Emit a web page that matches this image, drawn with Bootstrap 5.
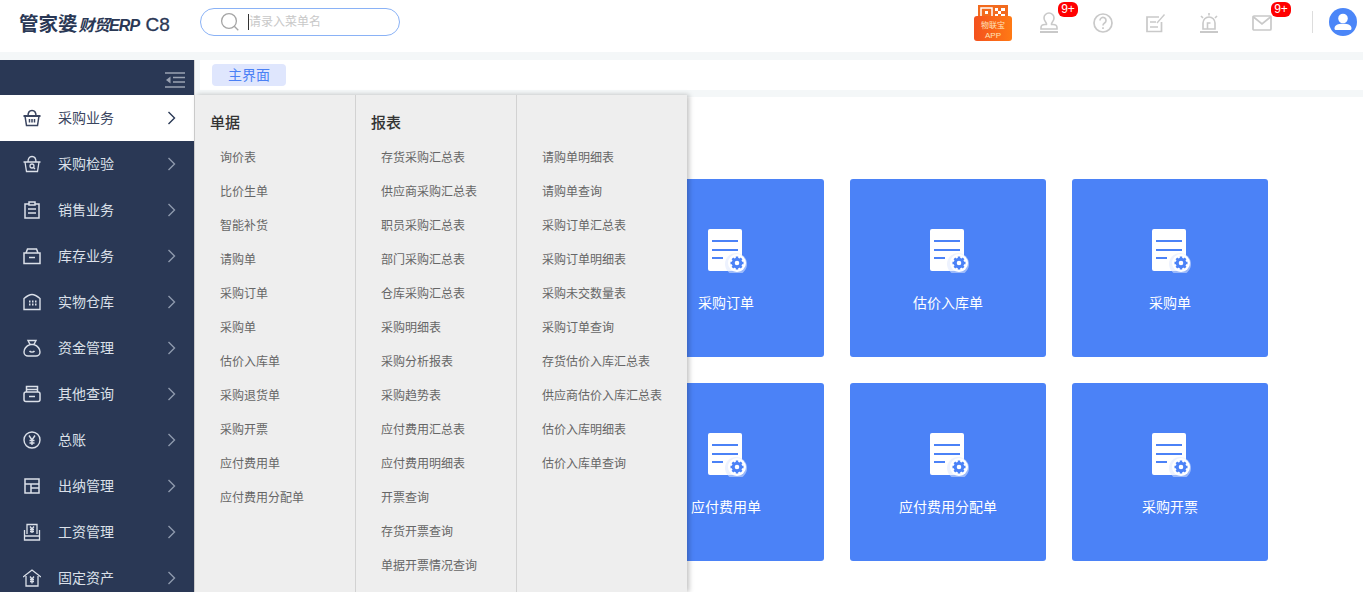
<!DOCTYPE html>
<html lang="zh">
<head>
<meta charset="utf-8">
<title>管家婆财贸ERP C8</title>
<link href="https://cdn.jsdelivr.net/npm/bootstrap@5.3.0/dist/css/bootstrap.min.css" rel="stylesheet">
<style>
html,body{height:592px;overflow:hidden;background:#fff}
body{font-family:"Liberation Sans","Noto Sans CJK SC",sans-serif;font-size:14px}
.top{height:52px;position:relative;padding-bottom:8px}
.logo{margin-left:19px;width:181px;color:#2a3855;white-space:nowrap;line-height:1;padding-top:5px}
.logo b{font-size:19.500px;font-weight:700}
.logo i{font-size:16px;font-weight:700;letter-spacing:-.8px;margin-left:1px}
.logo span{font-size:19px;font-weight:400;margin-left:6px;-webkit-text-stroke:.3px #2a3855}
.search{width:200px;height:28px;border:1px solid #8ab2f6;border-radius:14px;padding-left:19px;color:#bbb;font-size:12px}
.search em{font-style:normal;border-left:1px solid #333;margin-left:8px;line-height:16px;color:#c8c8c8}
.tools{margin-left:auto;padding-right:6px}
.tool{position:relative;width:20px;height:20px;display:block}
.tool .num{position:absolute;left:19px;top:-10px;width:20px;height:15px;background:#f00;color:#fff;border-radius:6px;font-size:12px;line-height:15px;text-align:center}
.app{width:38px;height:36px;position:relative;margin-right:23px;margin-top:1px}
.app .tag{position:absolute;left:0;bottom:0;width:38px;height:25px;background:linear-gradient(90deg,#f4511e,#ff7a14);border-radius:3px;color:#ffe4b8;font-size:8px;line-height:10px;text-align:center;padding-top:5px}
.sep{width:1px;height:22px;background:#ddd;margin:0 16px 0 20px}
.avatar{width:28px;height:28px}
.stage{height:540px;padding-top:8px;background:#f4f7f8;position:relative}
.side{width:195px;height:532px;background:#2a3855;overflow:hidden;color:#dbe0e9;flex:none;border-right:1px solid #d4d4d4}
.side .fold{height:35px;padding:12px 9px 0 0}
.side .row-i{height:46px;padding-left:23px;padding-right:18px}
.side .row-i svg.ic{width:18px;height:18px;margin-right:17px;flex:none}
.side .row-i span{flex:1}
.side .row-i svg.ch{width:9px;height:14px;color:#8e99ad}
.side .on{background:#fff;color:#3a4560;width:194px}
.side .on svg.ch{color:#2a3855!important}
.right{flex:1;margin-left:5px;min-width:0}
.tabs{height:30px;background:#fff;padding:4px 12px}
.tabs span{display:block;width:74px;height:22px;line-height:22px;background:#dfe6fd;color:#4a80f5;border-radius:4px;text-align:center}
.main{margin-top:7px;height:503px;background:#fff;padding:82px 0 0 206px}
.grid{display:grid;grid-template-columns:repeat(4,196px);grid-auto-rows:178px;gap:26px}
.tile{background:#4b82f7;border-radius:3px;color:#fff;padding-top:50px;text-align:center}
.tile svg{width:40px;height:44px;display:block;margin:0 auto 20px;position:relative;left:2px}
.fly{position:absolute;left:195px;top:43px;width:492px;height:497px;background:#eee;box-shadow:2px 0 5px rgba(0,0,0,.25);overflow:hidden}
.col-f{height:100%;border-right:1px solid #d2d2d2;padding-top:10px;flex:none}
.col-f:nth-child(1){width:161px;padding-left:15px}
.col-f:nth-child(2){width:161px;padding-left:15px}
.col-f:nth-child(3){width:170px;padding-left:25px;border-right:0}
.col-f h6{font-size:15px;font-weight:500;color:#333;height:35px;line-height:35px;margin:0 0 1px}
.col-f a{display:block;height:34px;line-height:34px;margin-left:10px;font-size:12px;color:#666;text-decoration:none;white-space:nowrap}
.col-f:nth-child(3) a{margin-left:0}
</style>
</head>
<body>
<svg width="0" height="0" class="position-absolute">
<defs>
<symbol id="doc" viewBox="0 0 40 44">
<rect x="0" y="0" width="34" height="42" rx="2" fill="#fff"/>
<path d="M4 12h26M4 21h26M4 29h11" stroke="#4b82f7" stroke-width="2" fill="none"/>
<circle cx="28" cy="35" r="11" fill="#dfe8fd" opacity=".55"/>
<circle cx="29" cy="34" r="9" fill="#fff"/>
<circle cx="29" cy="34" r="3.800" fill="#fff" stroke="#4b82f7" stroke-width="3"/>
<path d="M29 27.500v2.500M29 38v2.500M22.500 34H25M33 34h2.500M24.400 29.400l1.800 1.800M31.800 36.800l1.800 1.800M24.400 38.600l1.800-1.800M31.800 31.200l1.800-1.800" stroke="#4b82f7" stroke-width="2.400"/>
</symbol>
<symbol id="chev" viewBox="0 0 9 14"><path d="M1.500 1l6 6-6 6" fill="none" stroke="currentColor" stroke-width="1.400"/></symbol>
</defs>
</svg>

<header class="top d-flex align-items-center">
  <div class="logo"><b>管家婆</b><i>财贸ERP</i><span>C8</span></div>
  <div class="search d-flex align-items-center">
    <svg width="20" height="20" viewBox="0 0 20 20" fill="none" stroke="#a5a5a5" stroke-width="1.300"><circle cx="9" cy="9" r="7.400"/><path d="M14.300 14.300l4 4"/></svg>
    <em>请录入菜单名</em>
  </div>
  <div class="tools d-flex align-items-center">
    <div class="app">
      <svg class="position-absolute top-0 start-0" width="38" height="14" viewBox="0 0 38 14"><rect x="4" y="0" width="30" height="14" fill="#f26a1e"/><rect x="7" y="3" width="11" height="9" fill="none" stroke="#fff" stroke-width="1.500"/><rect x="11" y="6" width="3" height="3" fill="#fff"/><path d="M21 3h3v3h-3zM27 3h4v3h-4zM24 6h3v3h-3zM21 9h3v3h-3zM27 9h4v3h-4z" fill="#fff"/></svg>
      <div class="tag">物联宝<br>APP</div>
    </div>
    <a class="tool ms-1" style="margin-right:34px"><svg width="20" height="22" viewBox="0 0 20 22" fill="none" stroke="#c9c9c9" stroke-width="1.600"><path d="M2 15.500c0-2 1.500-3 4-3h1.500c.6-2-2.500-3-2.500-6.500a5 5 0 0 1 10 0c0 3.500-3.100 4.500-2.500 6.500H14c2.500 0 4 1 4 3v1.500H2z"/><path d="M1 20h18" stroke-width="2"/></svg><span class="num">9+</span></a>
    <a class="tool" style="margin-right:33px"><svg width="20" height="20" viewBox="0 0 20 20" fill="none" stroke="#c9c9c9" stroke-width="1.700"><circle cx="10" cy="10" r="9"/><path d="M7 7.500a3 3 0 1 1 4.600 2.500c-1.100.7-1.600 1.200-1.600 2.600"/><path d="M10 14.200v1.800"/></svg></a>
    <a class="tool" style="margin-right:33px"><svg width="20" height="20" viewBox="0 0 20 20" fill="none" stroke="#c9c9c9" stroke-width="1.700"><path d="M15.500 9v9.500H1V4h12"/><path d="M4 9h6M4 14h8"/><path d="M11 10L18.500 1.500" stroke-width="1.300"/></svg></a>
    <a class="tool" style="margin-right:33px"><svg width="20" height="20" viewBox="0 0 20 20" fill="none" stroke="#c9c9c9" stroke-width="1.600"><path d="M4 16V10a6 6 0 0 1 12 0v6z"/><path d="M8.500 16v-6h3"/><path d="M1 19h18" stroke-width="2"/><path d="M10 0v2.500M2 3l2 2M18 3l-2 2"/></svg></a>
    <a class="tool"><svg width="20" height="16" viewBox="0 0 20 16" fill="none" stroke="#c9c9c9" stroke-width="1.700"><rect x="1" y="1" width="18" height="14" rx="1"/><path d="M1.500 2l8.500 7 8.500-7"/></svg><span class="num">9+</span></a>
    <div class="sep" style="margin-left:40px"></div>
    <svg class="avatar" viewBox="0 0 28 28"><circle cx="14" cy="14" r="14" fill="#4b86f8"/><circle cx="14" cy="10.500" r="4.800" fill="#fff"/><path d="M5.500 20.500c0-3.500 3.500-4.800 8.500-4.800s8.500 1.300 8.500 4.800c0 1-.8 1.500-1.800 1.500H7.300c-1 0-1.800-.5-1.800-1.500z" fill="#fff"/></svg>
  </div>
</header>

<div class="stage d-flex align-items-start">
  <nav class="side">
    <div class="fold d-flex justify-content-end"><svg width="20" height="16" viewBox="0 0 20 16" fill="none" stroke="#9aa2b2" stroke-width="1.500"><path d="M0 1h20M8 5.500h12M8 10h12M0 15h20"/><path d="M5.500 4.500v7L1 8z" fill="#9aa2b2" stroke="none"/></svg></div>
    <div class="row-i on d-flex align-items-center"><svg class="ic" viewBox="0 0 18 18" fill="none" stroke="currentColor" stroke-width="1.500"><path d="M.5 7h17" stroke-width="2"/><path d="M2 7l1.500 9.500h11L16 7M5 7c0-3 1-5.500 4-5.500S13 4 13 7M6.500 10v3.500M9 10v3.500M11.500 10v3.500"/></svg><span>采购业务</span><svg class="ch"><use href="#chev"/></svg></div>
    <div class="row-i d-flex align-items-center"><svg class="ic" viewBox="0 0 18 18" fill="none" stroke="currentColor" stroke-width="1.300"><path d="M.5 7h17M2 7l1.500 9.500h11L16 7M5 7c0-3 1-5.500 4-5.500S13 4 13 7"/><circle cx="9" cy="11" r="2"/><path d="M10.500 12.500l1.500 1.500"/></svg><span>采购检验</span><svg class="ch"><use href="#chev"/></svg></div>
    <div class="row-i d-flex align-items-center"><svg class="ic" viewBox="0 0 18 18" fill="none" stroke="currentColor" stroke-width="1.500"><path d="M6 3H2v14h14V3h-4"/><rect x="6" y="1" width="6" height="3"/><path d="M5 8h8M5 12h8"/></svg><span>销售业务</span><svg class="ch"><use href="#chev"/></svg></div>
    <div class="row-i d-flex align-items-center"><svg class="ic" viewBox="0 0 18 18" fill="none" stroke="currentColor" stroke-width="1.500"><path d="M3 6l1.500-4h9L15 6"/><path d="M1 6h16v10.500H1z"/><path d="M6 10.500h6"/></svg><span>库存业务</span><svg class="ch"><use href="#chev"/></svg></div>
    <div class="row-i d-flex align-items-center"><svg class="ic" viewBox="0 0 18 18" fill="none" stroke="currentColor" stroke-width="1.400"><path d="M1 16.500V5.500C4 3 7 1.500 9 1.500s5 1.500 8 4v11z"/><path d="M6 8.500h1.500M9 8.500h1.500M12 8.500h1.500M6 11.500h1.500M9 11.500h1.500M12 11.500h1.500" stroke-width="1.800"/></svg><span>实物仓库</span><svg class="ch"><use href="#chev"/></svg></div>
    <div class="row-i d-flex align-items-center"><svg class="ic" viewBox="0 0 18 18" fill="none" stroke="currentColor" stroke-width="1.400"><path d="M5 1.500h8l-2 4c3.500 1.500 6 4.500 6 7.500 0 2.500-2 4-4 4H5c-2 0-4-1.500-4-4 0-3 2.500-6 6-7.500z"/><path d="M7 5.500h4M6.500 12c1 1.500 4 1.500 5 0"/></svg><span>资金管理</span><svg class="ch"><use href="#chev"/></svg></div>
    <div class="row-i d-flex align-items-center"><svg class="ic" viewBox="0 0 18 18" fill="none" stroke="currentColor" stroke-width="1.500"><path d="M3.500 7V1.500h11V7"/><rect x="1" y="7" width="16" height="9.500" rx="2"/><path d="M3.500 4.500h11M6 11.500h6"/></svg><span>其他查询</span><svg class="ch"><use href="#chev"/></svg></div>
    <div class="row-i d-flex align-items-center"><svg class="ic" viewBox="0 0 18 18" fill="none" stroke="currentColor" stroke-width="1.400"><circle cx="9" cy="9" r="8"/><path d="M6 4.500L9 9l3-4.500M9 9v5M6.500 9.500h5M6.500 12h5"/></svg><span>总账</span><svg class="ch"><use href="#chev"/></svg></div>
    <div class="row-i d-flex align-items-center"><svg class="ic" viewBox="0 0 18 18" fill="none" stroke="currentColor" stroke-width="1.500"><rect x="2" y="2" width="14" height="14"/><path d="M2 7h14M8 7v9M8 11h8"/></svg><span>出纳管理</span><svg class="ch"><use href="#chev"/></svg></div>
    <div class="row-i d-flex align-items-center"><svg class="ic" viewBox="0 0 18 18" fill="none" stroke="currentColor" stroke-width="1.300"><path d="M1.500 7v10h15V7M4 11V1.500h10V11M1.500 13h15"/><path d="M7 3.500L9 6l2-2.500M9 6v4M7 6.500h4M7 8.500h4"/></svg><span>工资管理</span><svg class="ch"><use href="#chev"/></svg></div>
    <div class="row-i d-flex align-items-center"><svg class="ic" viewBox="0 0 18 18" fill="none" stroke="currentColor" stroke-width="1.300"><path d="M0 8l9-7 9 7M3 7v10h12V7"/><path d="M7 7.500L9 10l2-2.500M9 10v4.500M7 10.500h4M7 12.500h4"/></svg><span>固定资产</span><svg class="ch"><use href="#chev"/></svg></div>
  </nav>

  <div class="right">
    <div class="tabs"><span>主界面</span></div>
    <main class="main">
      <div class="grid">
        <div class="tile"><svg><use href="#doc"/></svg>请购单</div>
        <div class="tile"><svg><use href="#doc"/></svg>采购订单</div>
        <div class="tile"><svg><use href="#doc"/></svg>估价入库单</div>
        <div class="tile"><svg><use href="#doc"/></svg>采购单</div>
        <div class="tile"><svg><use href="#doc"/></svg>采购退货单</div>
        <div class="tile"><svg><use href="#doc"/></svg>应付费用单</div>
        <div class="tile"><svg><use href="#doc"/></svg>应付费用分配单</div>
        <div class="tile"><svg><use href="#doc"/></svg>采购开票</div>
      </div>
    </main>
  </div>

  <div class="fly d-flex">
    <div class="col-f">
      <h6>单据</h6>
      <a href="#">询价表</a><a href="#">比价生单</a><a href="#">智能补货</a><a href="#">请购单</a><a href="#">采购订单</a><a href="#">采购单</a><a href="#">估价入库单</a><a href="#">采购退货单</a><a href="#">采购开票</a><a href="#">应付费用单</a><a href="#">应付费用分配单</a>
    </div>
    <div class="col-f">
      <h6>报表</h6>
      <a href="#">存货采购汇总表</a><a href="#">供应商采购汇总表</a><a href="#">职员采购汇总表</a><a href="#">部门采购汇总表</a><a href="#">仓库采购汇总表</a><a href="#">采购明细表</a><a href="#">采购分析报表</a><a href="#">采购趋势表</a><a href="#">应付费用汇总表</a><a href="#">应付费用明细表</a><a href="#">开票查询</a><a href="#">存货开票查询</a><a href="#">单据开票情况查询</a>
    </div>
    <div class="col-f">
      <h6>&nbsp;</h6>
      <a href="#">请购单明细表</a><a href="#">请购单查询</a><a href="#">采购订单汇总表</a><a href="#">采购订单明细表</a><a href="#">采购未交数量表</a><a href="#">采购订单查询</a><a href="#">存货估价入库汇总表</a><a href="#">供应商估价入库汇总表</a><a href="#">估价入库明细表</a><a href="#">估价入库单查询</a>
    </div>
  </div>
</div>
<script src="https://cdn.jsdelivr.net/npm/bootstrap@5.3.0/dist/js/bootstrap.bundle.min.js"></script>
</body>
</html>
